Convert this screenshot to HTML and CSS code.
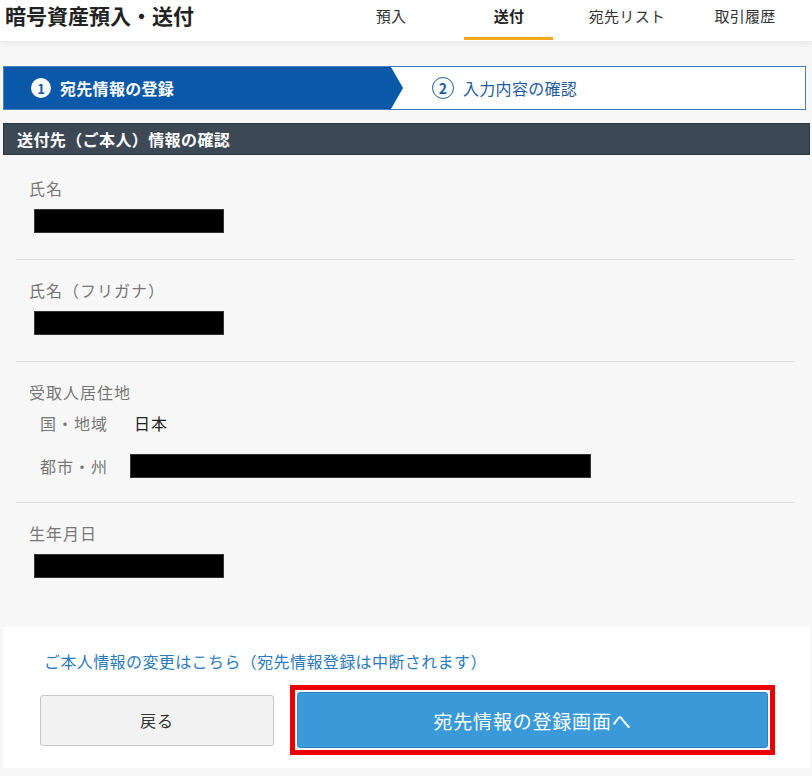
FILE: index.html
```html
<!DOCTYPE html>
<html lang="ja">
<head>
    <meta charset="UTF-8">
    <meta name="viewport" content="width=device-width, initial-scale=1.0">
    <link rel="stylesheet" href="styles.css">
</head>
<body>
    <header class="topbar">
        <h1 class="title">暗号資産預入・送付</h1>
        <nav class="tabs">
            <a class="tab">預入</a>
            <a class="tab active">送付</a>
            <a class="tab">宛先リスト</a>
            <a class="tab">取引履歴</a>
        </nav>
    </header>

    <main class="page">
        <div class="steps">
            <div class="step current">
                <span class="num">1</span>
                <span>宛先情報の登録</span>
            </div>
            <div class="step next">
                <span class="num">2</span>
                <span>入力内容の確認</span>
            </div>
        </div>

        <h2 class="section-title">送付先（ご本人）情報の確認</h2>

        <div class="info">
            <div class="row">
                <div class="label">氏名</div>
                <div class="masked"></div>
            </div>
            <div class="row">
                <div class="label">氏名（フリガナ）</div>
                <div class="masked"></div>
            </div>
            <div class="row address">
                <div class="label">受取人居住地</div>
                <div class="sub first">
                    <span class="sub-label">国・地域</span>
                    <span class="sub-value">日本</span>
                </div>
                <div class="sub">
                    <span class="sub-label">都市・州</span>
                    <div class="masked wide"></div>
                </div>
            </div>
            <div class="row last">
                <div class="label">生年月日</div>
                <div class="masked"></div>
            </div>
        </div>

        <div class="actions">
            <a class="change-link">ご本人情報の変更はこちら（宛先情報登録は中断されます）</a>
            <div class="buttons">
                <button class="btn back">戻る</button>
                <div class="highlight">
                    <button class="btn primary">宛先情報の登録画面へ</button>
                </div>
            </div>
        </div>
    </main>
</body>
</html>
```

FILE: styles.css
```css
* {
    box-sizing: border-box;
    margin: 0;
    padding: 0;
}

body {
    width: 812px;
    min-height: 776px;
    background: #f7f7f7;
    font-family: "Noto Sans CJK JP", "Noto Sans", sans-serif;
    color: #333;
}

/* cabecera */
.topbar {
    display: flex;
    align-items: flex-start;
    justify-content: space-between;
    height: 42px;
    background: #fff;
    box-shadow: 0 2px 6px rgba(0, 0, 0, 0.06);
    border-bottom: 1px solid #ececec;
}

.title {
    font-size: 21px;
    font-weight: bold;
    color: #222;
    line-height: 30px;
    padding-left: 5px;
}

.tabs {
    display: flex;
    margin-right: 8px;
}

.tab {
    position: relative;
    width: 118px;
    height: 41px;
    text-align: center;
    font-size: 15px;
    line-height: 32px;
    color: #333;
    letter-spacing: 0.3px;
}

.tab.active {
    font-weight: bold;
    color: #222;
}

.tab.active::after {
    content: '';
    position: absolute;
    left: 14px;
    right: 15px;
    bottom: 1px;
    height: 3px;
    background: #f5a81c;
}

.page {
    padding: 24px 2px 0 3px;
}

/* pasos */
.steps {
    display: flex;
    align-items: center;
    height: 44px;
    margin-right: 4px;
    background: #fff;
    border: 1px solid #4a7cc0;
}

.step {
    display: flex;
    align-items: center;
    gap: 9px;
    font-size: 16px;
    height: 100%;
    letter-spacing: 0.3px;
}

.step.current {
    width: 399px;
    padding-left: 27px;
    background: #0a58aa;
    color: #fff;
    font-weight: bold;
    clip-path: polygon(0 0, 387px 0, 100% 50%, 387px 100%, 0 100%);
}

.step.next {
    padding-left: 29px;
    color: #1e5b9e;
}

.num {
    display: flex;
    align-items: center;
    justify-content: center;
    width: 20px;
    height: 20px;
    border-radius: 50%;
    font-size: 13px;
    font-weight: bold;
    letter-spacing: 0;
}

.current .num {
    background: #fff;
    color: #0a58aa;
}

.next .num {
    border: 1.5px solid #1e5b9e;
    color: #1e5b9e;
    font-size: 14px;
    width: 22px;
    height: 22px;
}

.section-title {
    margin-top: 13px;
    height: 32px;
    padding-left: 13px;
    background: #3d4855;
    border: 1px solid #2c3642;
    color: #fff;
    font-size: 16px;
    font-weight: bold;
    line-height: 30px;
    letter-spacing: 0.4px;
}

/* datos */
.info {
    padding: 3px 16px 23px 13px;
}

.row {
    padding: 20px 0 26px 13px;
    border-bottom: 1px solid #dcdcdc;
}

.row.address {
    padding-bottom: 24px;
}

.row.last {
    border-bottom: none;
}

.label {
    font-size: 16px;
    line-height: 20px;
    color: #777;
    margin-bottom: 11px;
    letter-spacing: 1px;
}

.masked {
    width: 190px;
    height: 24px;
    margin-left: 5px;
    background: #000;
    border: 1px solid #333;
}

.masked.wide {
    width: 461px;
    margin-left: 0;
}

.sub {
    display: flex;
    align-items: center;
    height: 24px;
    margin-top: 21px;
    padding-left: 11px;
}

.sub.first {
    height: 20px;
    margin-top: 3px;
}

.sub-label {
    width: 90px;
    font-size: 16px;
    color: #777;
    letter-spacing: 1px;
}

.sub-value {
    padding-left: 4px;
    font-size: 16px;
    color: #222;
    letter-spacing: 1px;
}

/* acciones */
.actions {
    background: #fff;
    padding: 22px 0 13px 37px;
}

.change-link {
    display: block;
    padding-left: 4px;
    font-size: 16px;
    line-height: 24px;
    color: #2a7bc0;
    letter-spacing: 0.4px;
}

.buttons {
    display: flex;
    align-items: center;
    gap: 16px;
    margin-top: 12px;
}

.btn {
    font-family: inherit;
    border-radius: 3px;
    cursor: pointer;
}

.btn.back {
    width: 234px;
    height: 51px;
    background: #f2f2f2;
    border: 1px solid #c8c8c8;
    font-size: 16px;
    color: #333;
    letter-spacing: 1px;
}

.highlight {
    border: 5px solid #ea0000;
    padding: 2px;
    background: #fff;
}

.btn.primary {
    display: block;
    width: 471px;
    height: 56px;
    background: #3a9ad9;
    border: 1px solid #2d86c4;
    color: #fff;
    font-size: 19px;
    letter-spacing: 0.8px;
}
```
